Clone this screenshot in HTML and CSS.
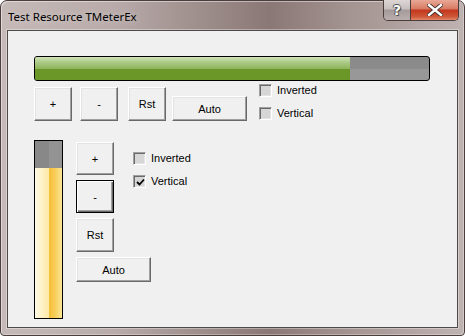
FILE: index.html
```html
<!DOCTYPE html>
<html>
<head>
<meta charset="utf-8">
<title>Test Resource TMeterEx</title>
<link rel="stylesheet" href="styles.css">
</head>
<body>
<div class="window">
  <div class="titlebar">
    <span class="title">Test Resource TMeterEx</span>
    <div class="caption-btns">
      <div class="cap help">?</div>
      <div class="cap close">
        <svg width="16" height="12" viewBox="0 0 16 12">
          <path d="M2 1 L14 11 M14 1 L2 11" stroke="#3a2a28" stroke-width="4.2" stroke-linecap="square"/>
          <path d="M2 1 L14 11 M14 1 L2 11" stroke="#ffffff" stroke-width="2.4" stroke-linecap="square"/>
        </svg>
      </div>
    </div>
  </div>
  <div class="client">
    <div class="hmeter"><div class="hfill" style="width: 80%"></div></div>
    <div class="row1">
      <div class="btn-group">
        <div class="btn big">+</div>
        <div class="btn big gap8">-</div>
        <div class="btn big gap10">Rst</div>
        <div class="btn wide gap6">Auto</div>
      </div>
      <div class="checks top-checks">
        <div class="check"><span class="box"></span><span class="lbl">Inverted</span></div>
        <div class="check"><span class="box"></span><span class="lbl">Vertical</span></div>
      </div>
    </div>
    <div class="vsection">
      <div class="vmeter"><div class="vempty"></div><div class="vfill"></div></div>
      <div class="vcontrols">
        <div class="vrow">
          <div class="vbtns">
            <div class="btn tall">+</div>
            <div class="btn tall default">-</div>
            <div class="btn tall rst">Rst</div>
          </div>
          <div class="checks side-checks">
            <div class="check"><span class="box"></span><span class="lbl">Inverted</span></div>
            <div class="check"><span class="box checked"><svg width="9" height="9" viewBox="0 0 9 9"><path d="M1 4 L3.5 6.5 L8 1.5" stroke="#000" stroke-width="1.8" fill="none"/></svg></span><span class="lbl">Vertical</span></div>
          </div>
        </div>
        <div class="btn wide vauto">Auto</div>
      </div>
    </div>
  </div>
</div>
</body>
</html>
```

FILE: styles.css
```css
html, body {
  margin: 0;
  padding: 0;
  background: #ffffff;
}

.window {
  width: 465px;
  height: 336px;
  box-sizing: border-box;
  border: 1px solid #4a3d3c;
  border-radius: 7px 7px 4px 4px;
  background: linear-gradient(to right, #c6bab8 0%, #b7aaa8 25%, #9b8b89 45%, #8a7876 58%, #a39391 75%, #bfb3b1 100%);
  display: flex;
  flex-direction: column;
  padding: 0 6px 7px 6px;
  box-shadow: inset 1px 1px 0 rgba(255,255,255,0.45), inset -1px -1px 0 rgba(255,255,255,0.3);
  font-family: "Liberation Sans", Arial, sans-serif;
}

.titlebar {
  height: 29px;
  display: flex;
  align-items: center;
  padding-left: 1px;
}

.title {
  font-family: "Noto Sans", "Liberation Sans", sans-serif;
  font-size: 11.5px;
  color: #000;
  padding-top: 1px;
  text-shadow: 0 0 6px rgba(255,255,255,0.5);
}

.caption-btns {
  margin-left: auto;
  align-self: flex-start;
  margin-top: -1px;
  margin-right: -1px;
  display: flex;
  height: 20px;
  border: 1px solid #4b3b39;
  border-top: none;
  border-radius: 0 0 5px 5px;
  overflow: hidden;
}

.cap {
  height: 20px;
  display: flex;
  align-items: center;
  justify-content: center;
  box-sizing: border-box;
}

.help {
  width: 27px;
  background: linear-gradient(to bottom, #ddd6d5 0%, #c7bfbe 45%, #a59a99 50%, #b9afae 100%);
  border-right: 1px solid #4b3b39;
  color: #fff;
  font-family: "DejaVu Sans", sans-serif;
  font-weight: bold;
  font-size: 14px;
  text-shadow: 0 0 1px #333, 1px 1px 0 #555, -1px 0 0 #555, 0 -1px 0 #555;
}

.close {
  width: 47px;
  background: linear-gradient(to bottom, #e9a896 0%, #d77a62 45%, #c2361c 50%, #d05a3c 85%, #e08a6a 100%);
}

.client {
  flex: 1;
  background: #f0f0f0;
  border: 1px solid #4e4a4a;
  box-shadow: 0 0 0 1px rgba(255,255,255,0.35);
  padding: 25px 0 0 26px;
  display: flex;
  flex-direction: column;
  align-items: flex-start;
  font-family: "Liberation Sans", Arial, sans-serif;
  font-size: 11px;
  color: #000;
}

.hmeter {
  width: 396px;
  height: 25px;
  box-sizing: border-box;
  border: 1px solid #000;
  border-radius: 3px;
  overflow: hidden;
  background: linear-gradient(to bottom, #8b8b8b 0%, #8b8b8b 50%, #989898 50%, #989898 100%);
}

.hfill {
  height: 100%;
  background: linear-gradient(to bottom, #cfe2b6 0%, #a9c883 25%, #8fb65c 50%, #6b9628 50%, #6b9628 100%);
}

.row1 {
  display: flex;
  align-items: flex-start;
  margin-top: 3px;
}

.btn-group {
  display: flex;
  align-items: flex-end;
  margin-top: 3px;
}

.btn {
  box-sizing: border-box;
  background: #f0f0f0;
  border: 1px solid;
  border-color: #ffffff #696969 #696969 #ffffff;
  box-shadow: inset -1px -1px 0 #a0a0a0, inset 1px 1px 0 #e3e3e3;
  display: flex;
  align-items: center;
  justify-content: center;
  font-size: 11px;
  color: #000;
}

.big {
  width: 38px;
  height: 34px;
}

.wide {
  width: 75px;
  height: 25px;
}

.gap8 { margin-left: 8px; }
.gap10 { margin-left: 10px; }
.gap6 { margin-left: 6px; }

.checks {
  display: flex;
  flex-direction: column;
  gap: 10px;
}

.top-checks {
  margin-left: 12px;
}

.check {
  display: flex;
  align-items: center;
  height: 13px;
}

.box {
  width: 13px;
  height: 13px;
  box-sizing: border-box;
  background: #d6d6d6;
  border: 1px solid;
  border-color: #a0a0a0 #ffffff #ffffff #a0a0a0;
  box-shadow: inset 1px 1px 0 #696969, inset -1px -1px 0 #e3e3e3;
  display: flex;
  align-items: center;
  justify-content: center;
  flex: none;
}

.box svg {
  display: block;
  margin: 1px 0 0 1px;
}

.lbl {
  margin-left: 5px;
  font-size: 11px;
  line-height: 13px;
}

.vsection {
  display: flex;
  align-items: flex-start;
  margin-top: 19px;
}

.vmeter {
  width: 29px;
  height: 179px;
  box-sizing: border-box;
  border: 1px solid #000;
  display: flex;
  flex-direction: column;
}

.vempty {
  height: 27px;
  background: linear-gradient(to right, #888888 0%, #888888 50%, #939393 50%, #939393 100%);
}

.vfill {
  flex: 1;
  background: linear-gradient(to right, #fffae6 0%, #fde9a8 50%, #f4bd34 50%, #f8cf5c 75%, #fce49a 100%);
}

.vcontrols {
  display: flex;
  flex-direction: column;
  margin-left: 13px;
  margin-top: 2px;
}

.vrow {
  display: flex;
  align-items: flex-start;
}

.vbtns {
  display: flex;
  flex-direction: column;
  gap: 5px;
}

.tall {
  width: 38px;
  height: 33px;
}

.tall.rst {
  height: 34px;
}

.default {
  border: 1px solid #000;
  box-shadow: inset 1px 1px 0 #ffffff, inset -1px -1px 0 #696969, inset -2px -2px 0 #a0a0a0;
}

.side-checks {
  margin-left: 19px;
  margin-top: 10px;
}

.vauto {
  margin-top: 5px;
}
```
